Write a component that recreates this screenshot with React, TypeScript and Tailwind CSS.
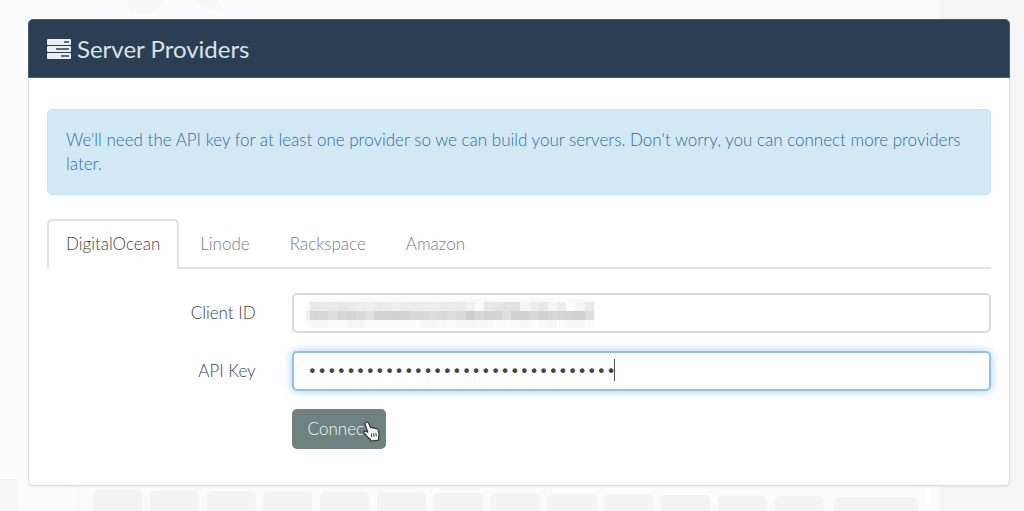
import React, { useState } from "react";

const providers = ["DigitalOcean", "Linode", "Rackspace", "Amazon"];

const maskRows = [
  [232, 236, 235, 230, 234, 237, 238, 235, 237, 238, 237, 235, 236, 237, 236, 235, 234, 240, 249, 231, 230, 226, 225, 245, 238, 231, 245, 238, 252, 246, 234],
  [214, 216, 223, 214, 211, 217, 224, 210, 211, 210, 211, 216, 217, 220, 218, 220, 217, 204, 214, 210, 211, 222, 208, 210, 215, 208, 214, 212, 211, 209, 220],
  [248, 249, 252, 252, 247, 247, 252, 252, 251, 252, 252, 252, 248, 248, 249, 252, 247, 247, 248, 248, 252, 252, 250, 249, 252, 248, 246, 252, 247, 248, 252],
];

function TasksIcon() {
  return (
    <svg aria-hidden="true" viewBox="0 0 24 20" className="h-5 w-6 shrink-0">
      <g fill="#e9eef2">
        <rect width="24" height="6" rx="1" />
        <rect y="7" width="24" height="6" rx="1" />
        <rect y="14" width="24" height="6" rx="1" />
      </g>
      <g fill="#5d6d7d">
        <rect x="17" y="2" width="5" height="2" />
        <rect x="9" y="9" width="13" height="2" />
        <rect x="14" y="16" width="8" height="2" />
      </g>
    </svg>
  );
}

function Backdrop() {
  return (
    <svg
      aria-hidden="true"
      className="pointer-events-none absolute inset-0 h-full w-full"
      viewBox="0 0 1024 511"
      preserveAspectRatio="none"
    >
      <path d="M127 0h38l-6 8-10 6-18-1Zm65 0h26l4 11-12-3-14-6Z" fill="#f8f7f9" />
      <path d="M940 0h84v511h-84Z" fill="#f5f5f7" />
      <path d="M0 479h17v32H0Z" fill="#f5f4f6" />
      <path d="M77 486h2v25h-2Z" fill="#f6f5f7" />
      {Array.from({ length: 13 }, (_, i) => (
        <rect key={i} x={93 + i * 56.8} y={490 + i * 0.5} width="49" height="30" rx="5" fill="#f4f4f6" />
      ))}
      <path d="M838 497h76q4 0 4 4v10h-84v-10q0-4 4-4Z" fill="#f4f4f6" />
      <path d="M925 487h6v24h-6Z" fill="#fff" />
    </svg>
  );
}

function MaskedValue() {
  return (
    <svg
      aria-hidden="true"
      viewBox="0 0 288 30"
      className="pointer-events-none absolute top-1.5 left-3.5 h-[30px] w-72"
      shapeRendering="crispEdges"
    >
      <rect width="288" height="28" fill="#fafafa" />
      <rect y="12" width="4" height="9" fill="#eee" />
      {maskRows.map((row, r) =>
        row.map((v, c) => (
          <rect
            key={`${r}-${c}`}
            x={4 + c * 9.15}
            y={3 + r * 9}
            width="9.2"
            height={r === 2 ? 8 : 9}
            fill={`rgb(${v},${v},${v})`}
          />
        )),
      )}
    </svg>
  );
}

function HandCursor() {
  return (
    <svg
      aria-hidden="true"
      viewBox="0 0 17 21"
      className="pointer-events-none absolute top-3 right-1.5 h-[21px] w-[17px]"
    >
      <path
        d="M3.4 1.2C4.6.8 5.5 1.6 5.9 2.7l1.7 4.1c.8-.7 2-.5 2.4.3.9-.6 2-.3 2.4.6 1.2-.5 2.4.1 2.7 1.3l.9 3.4c.3 1.8-.2 2.9-.5 4.1l.2 2.7-7.8 1-.9-2.1C5.2 16.9 4 15.3 2.7 13.8L1 12c-.8-1 .4-2.5 1.7-1.8l2.1 1L2.2 3.8c-.4-1.2.1-2.3 1.2-2.6Z"
        fill="#fff"
        stroke="#30383b"
        strokeWidth="1.3"
        strokeLinejoin="round"
      />
      <path d="m8.3 12.4.4 3.8M10.6 12.1l.4 3.8M12.9 11.8l.4 3.8" fill="none" stroke="#30383b" strokeWidth="1" />
    </svg>
  );
}

export default function App() {
  const [active, setActive] = useState("DigitalOcean");
  const [clientId, setClientId] = useState("");
  const [apiKey, setApiKey] = useState("0".repeat(32));

  return (
    <div className="relative min-h-screen bg-[#fbfafc] pt-[19px] pr-3.5 pb-6 pl-7 font-['Lato',sans-serif] text-[17px] leading-6 font-light text-[#444]">
      <Backdrop />
      <main className="relative rounded-[5px] border border-[#dddde1] bg-[#fefefe] shadow-[0_1px_2px_rgba(0,0,0,0.08)]">
        <header className="-mx-px -mt-px flex items-center gap-1.5 rounded-t-[5px] border border-[#50566b] bg-[#2b3f54] px-[18px] pt-[15px] pb-3.5 text-[#d9e1e8]">
          <TasksIcon />
          <h1 className="text-2xl leading-7 font-normal">Server Providers</h1>
        </header>

        <div className="px-[18px] pt-[31px] pb-9">
          <p className="rounded-[5px] border border-[#bfe6ef] bg-[#d2e8f5] p-[18px] text-[#2f7198]">
            We'll need the API key for at least one provider so we can build your servers. Don't worry, you can connect
            more providers later.
          </p>

          <div role="tablist" aria-label="Providers" className="mt-6 flex gap-0.5 border-b-2 border-[#e3e1e7]">
            {providers.map((name) => (
              <button
                key={name}
                type="button"
                role="tab"
                aria-selected={active === name}
                onClick={() => setActive(name)}
                className={
                  active === name
                    ? "-mb-0.5 rounded-t-[5px] border-2 border-b-0 border-[#e3e1e7] bg-[#fefefe] px-[17px] pt-[11px] pb-[13px] text-[#444]"
                    : "-mb-0.5 rounded-t-[5px] border-2 border-b-0 border-transparent px-[17px] pt-[11px] pb-[13px] text-[#71807f]"
                }
              >
                {name}
              </button>
            ))}
          </div>

          <form
            className="mt-6 grid grid-cols-[22.1%_1fr] items-center gap-x-9 gap-y-[18px]"
            onSubmit={(e) => e.preventDefault()}
          >
            <label htmlFor="client-id" className="text-right">
              Client ID
            </label>
            <div className="relative">
              <input
                id="client-id"
                type="text"
                value={clientId}
                onChange={(e) => setClientId(e.target.value)}
                className="block h-10 w-full rounded-[5px] border-2 border-[#dad8db] bg-[#fefefe] px-3.5 outline-none"
              />
              {clientId === "" && <MaskedValue />}
            </div>

            <label htmlFor="api-key" className="text-right">
              API Key
            </label>
            <div className="relative">
              <input
                id="api-key"
                type="password"
                value={apiKey}
                onChange={(e) => setApiKey(e.target.value)}
                className="block h-10 w-full rounded-[5px] border-2 border-[#94c0e8] bg-[#fefefe] px-3.5 font-['DejaVu_Sans_Mono',monospace] text-base font-normal text-[#444] shadow-[0_0_8px_rgba(102,175,233,0.6)] outline-none"
              />
              <span aria-hidden="true" className="pointer-events-none absolute top-2 left-[322px] h-[22px] w-px bg-[#555]" />
            </div>

            <div className="col-start-2">
              <button
                type="submit"
                className="relative block h-10 cursor-pointer rounded-[5px] bg-[#6f8281] px-4 text-[#f1f6f6]"
              >
                Connect
                <HandCursor />
              </button>
            </div>
          </form>
        </div>
      </main>
    </div>
  );
}
